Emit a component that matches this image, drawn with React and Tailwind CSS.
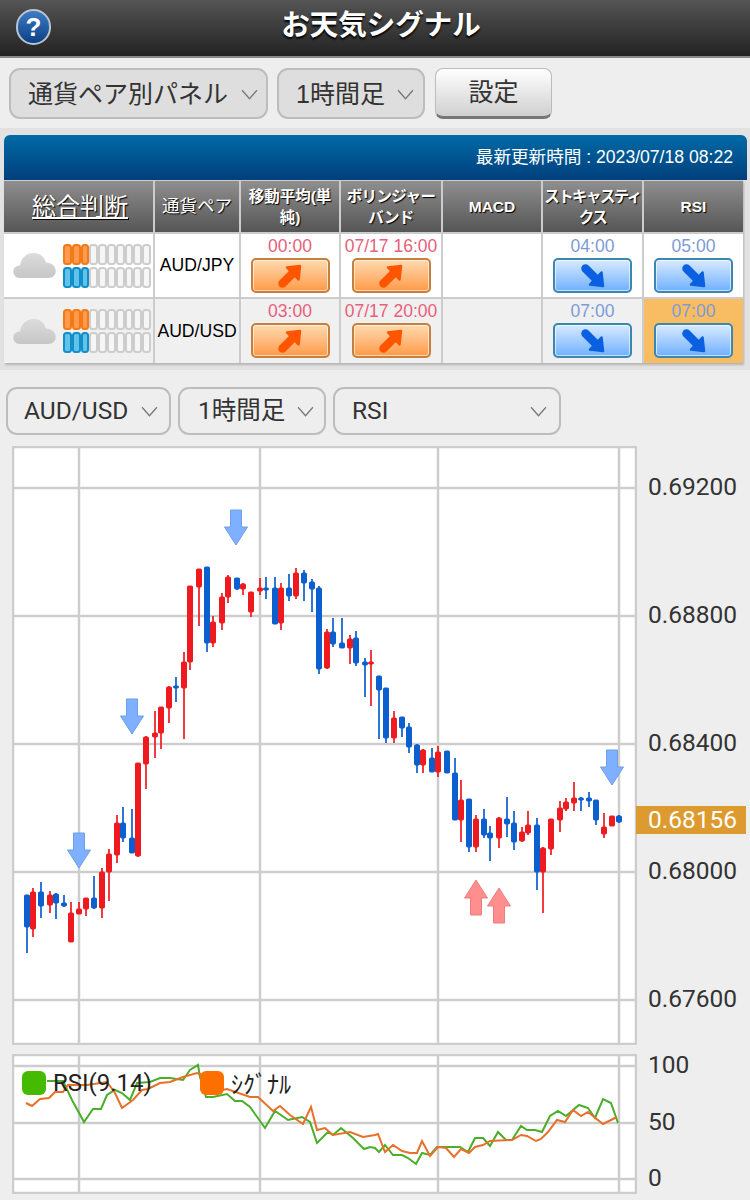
import React from "react";

const R = "#ee1a1f";
const B = "#0b5fcf";
// [x, wickTop, wickBottom, bodyTop, bodyBottom, colour]
const candles = [
  [27,895,953,895,927,B],[33,888,937,892,929,R],[41,882,918,892,906,B],[50,891,913,895,905,R],
  [56,893,919,894,903,B],[64,895,907,903,906,B],[71,902,942,913,942,R],[79,902,914,909,914,R],
  [86,898,916,898,909,R],[94,876,909,898,908,B],[102,868,918,872,908,R],[109,849,901,854,872,R],
  [117,815,863,823,855,R],[123,807,842,823,838,B],[132,809,853,838,853,B],[138,763,857,763,856,R],
  [146,736,789,737,764,R],[155,711,758,733,737,R],[161,707,749,707,733,R],[169,686,723,687,708,R],
  [176,677,702,686,688,B],[184,652,739,662,688,R],[190,586,670,586,662,R],[199,569,626,569,587,R],
  [207,567,652,567,643,B],[213,616,647,622,643,R],[222,593,630,597,623,R],[228,575,603,577,597,R],
  [237,578,590,578,589,B],[243,583,595,584,589,R],[251,592,617,592,612,R],[260,578,595,588,591,R],
  [266,577,599,588,590,B],[275,577,624,588,624,B],[281,583,630,588,623,R],[289,574,601,588,596,B],
  [296,568,599,573,596,R],[304,570,601,573,583,B],[312,579,612,582,589,B],[319,586,674,588,669,B],
  [327,629,669,632,668,R],[333,618,647,632,644,B],[342,618,648,643,648,B],[350,635,664,639,648,R],
  [356,631,666,638,663,B],[365,658,697,662,665,B],[371,650,706,662,664,R],[379,676,739,676,690,B],
  [386,688,743,688,738,B],[394,711,743,718,738,R],[402,717,737,717,728,B],[409,723,753,727,747,B],
  [417,744,773,745,765,B],[423,749,773,750,765,R],[432,748,772,758,772,B],[438,746,777,752,772,R],
  [447,751,773,751,773,B],[455,758,820,773,820,B],[461,780,842,800,820,R],[469,799,852,799,847,B],
  [476,815,852,819,847,R],[484,809,838,819,835,B],[490,826,861,833,838,B],[499,817,848,818,838,R],
  [507,797,837,819,824,B],[514,811,850,823,842,B],[522,827,842,832,841,R],[528,811,835,825,833,R],
  [537,818,890,825,872,B],[543,847,913,848,872,R],[551,819,855,819,849,R],[560,801,832,808,820,R],
  [566,798,811,802,809,R],[574,782,811,798,803,R],[581,797,811,798,800,B],[589,792,807,798,801,B],
  [596,800,825,800,820,B],[604,813,838,827,834,R],[612,816,826,816,826,R],[619,815,823,816,822,B],
];

const green = "47,1081 63,1081 72,1100 84,1122 93,1109 101,1109 107,1095 115,1090 122,1093 130,1100 137,1083 150,1082 160,1078 170,1078 183,1080 190,1070 198,1065 200,1077 206,1097 213,1097 227,1094 235,1101 242,1101 250,1107 265,1128 275,1111 288,1120 302,1117 310,1122 317,1143 328,1132 333,1135 341,1128 353,1138 364,1149 370,1147 375,1148 379,1152 385,1145 393,1155 402,1155 408,1158 416,1164 422,1153 430,1155 437,1147 460,1147 468,1152 475,1138 483,1138 490,1146 498,1132 506,1140 512,1140 521,1126 527,1130 535,1130 542,1132 550,1116 558,1111 566,1116 579,1105 588,1108 595,1118 603,1099 611,1103 618,1123";
const orange = "26,1103 32,1106 40,1099 49,1098 55,1092 63,1092 68,1085 87,1085 107,1082 115,1093 122,1108 133,1100 142,1090 148,1089 160,1083 170,1082 183,1077 197,1073 203,1075 213,1092 227,1089 250,1097 258,1097 273,1111 280,1106 290,1115 303,1124 311,1107 317,1130 325,1128 333,1135 350,1132 363,1137 375,1135 378,1134 385,1152 393,1145 402,1151 410,1153 417,1153 422,1141 430,1156 438,1147 446,1148 454,1157 461,1149 469,1153 475,1147 483,1145 490,1141 512,1140 521,1135 527,1136 536,1141 541,1139 548,1132 557,1120 565,1122 573,1110 581,1116 588,1112 603,1124 617,1117";

const downArrows = [[79,833],[132,699],[236,510],[612,750]];
const upArrows = [[476,880],[499,888]];

function Chevron({ className }) {
  return (
    <svg viewBox="0 0 16 10" className={className} fill="none" stroke="#777" strokeWidth="1.2">
      <path d="M1 1l7 8 7-8" />
    </svg>
  );
}

function Select({ label, className, chevron }) {
  return (
    <div className={`flex items-center border-2 rounded-[11px] border-[#bdbdbd] text-[#333] ${className}`}>
      <span className="whitespace-nowrap">{label}</span>
      <Chevron className={`w-[17px] h-[11px] ${chevron}`} />
    </div>
  );
}

function Arrow({ dir }) {
  const color = dir === "up" ? "#ff5500" : "#0a60e0";
  return (
    <svg viewBox="0 0 24 24" className="w-[24px] h-[24px]" fill={color} stroke={color} strokeLinejoin="round">
      {dir === "up" ? (
        <g>
          <path d="M4.500 19.500 14 10" strokeWidth="8.500" strokeLinecap="round" fill="none" />
          <path d="M9 3.500 22 2 20.500 15.500Z" strokeWidth="2.500" />
        </g>
      ) : (
        <g>
          <path d="M4.500 4.500 14 14" strokeWidth="8.500" strokeLinecap="round" fill="none" />
          <path d="M9 20.500 22 22 20.500 8.500Z" strokeWidth="2.500" />
        </g>
      )}
    </svg>
  );
}

function Signal({ time, dir, bg }) {
  const up = dir === "up";
  return (
    <div className={`flex flex-col items-center pt-[1px] ${bg}`}>
      <div className={`h-[23px] leading-[23px] text-[17.5px] whitespace-nowrap ${up ? "text-[#e8607a]" : "text-[#7c9bd8]"}`}>{time}</div>
      <div
        className={`w-[79px] h-[35px] rounded-[5px] border-2 flex items-center justify-center shadow-[inset_0_0_0_1px_rgba(255,255,255,0.6)] ${
          up
            ? "border-[#c6803c] bg-gradient-to-b from-[#ffd9ae] to-[#ff9a45]"
            : "border-[#3a88b0] bg-gradient-to-b from-[#d8eaff] to-[#6fb0ff]"
        }`}
      >
        <Arrow dir={dir} />
      </div>
    </div>
  );
}

function Bars({ on, tone }) {
  return (
    <div className="flex">
      {Array.from({ length: 10 }).map((_, i) => (
        <div
          key={i}
          className={`w-[8.8px] h-[21px] rounded-[3.5px] border-2 ${
            i < on
              ? tone === "o"
                ? "bg-[#ff9a50] border-[#f47a14]"
                : "bg-[#62c2ea] border-[#108fca]"
              : "bg-[#f6f6f6] border-[#cdcdcd]"
          }`}
        />
      ))}
    </div>
  );
}

function Weather({ bg, id }) {
  return (
    <div className={`flex items-center pl-[9px] ${bg}`}>
      <svg viewBox="0 0 44 28" className="w-[43px] h-[27px] mr-[7px] shrink-0">
        <defs>
          <linearGradient id={id} x1="0" y1="0" x2="0" y2="1">
            <stop offset="0" stopColor="#dcdcdc" />
            <stop offset="1" stopColor="#c6c6c6" />
          </linearGradient>
        </defs>
        <path
          d="M7 27C2 27 0 23 0 20.500C0 16.500 3 14 7 14C8 7 13 1 21 1C28 1 32 5 34 11C40 11 44 15 44 20C44 24 41 27 36 27Z"
          fill={`url(#${id})`}
        />
      </svg>
      <div className="flex flex-col gap-[2px]">
        <Bars on={3} tone="o" />
        <Bars on={3} tone="b" />
      </div>
    </div>
  );
}

const headCell =
  "flex items-center justify-center text-center bg-gradient-to-b from-[#8f8f8f] to-[#565656] text-white [text-shadow:1px_1px_1px_#000]";
const smallHead = `${headCell} font-bold text-[15.5px] leading-[21px] whitespace-nowrap`;

function Pair({ name, bg }) {
  return <div className={`flex items-center justify-center text-[17.6px] text-black ${bg}`}>{name}</div>;
}

function Grid({ lines }) {
  return (
    <g stroke="#cdcdcd" strokeWidth="2.500" fill="none">
      {lines.map((y) => (
        <path key={y} d={`M12 ${y}H636`} />
      ))}
      {[79, 260, 438, 619].map((x) => (
        <path key={x} d={`M${x} 440V1200`} />
      ))}
    </g>
  );
}

export default function App() {
  return (
    <div className="w-[750px] h-[1200px] overflow-hidden bg-[#eeeeee] font-['Liberation_Sans','Noto_Sans_CJK_JP',sans-serif]">
      <header className="relative h-[58px] bg-gradient-to-b from-[#555555] to-[#232323] border-b-2 border-[#8a8a8a] flex items-center justify-center">
        <div className="absolute left-[16px] top-[9px] w-[35px] h-[36px] rounded-full border-2 border-[#b9c4d2] bg-gradient-to-b from-[#3d7cc4] to-[#0d3f86] flex items-center justify-center text-white font-bold text-[26px] leading-none">
          ?
        </div>
        <h1 className="ml-[12px] -mt-[6px] text-white font-bold text-[28.500px] [text-shadow:0_2px_2px_#000]">お天気シグナル</h1>
      </header>

      <div className="h-[70px] flex items-start pt-[10px] pl-[9px]">
        <Select label="通貨ペア別パネル" className="w-[259px] h-[51px] bg-[#dedede] pl-[17px] pt-[2px] text-[25px]" chevron="ml-[13px]" />
        <Select label="1時間足" className="w-[148px] h-[51px] bg-[#dedede] pl-[17px] pt-[2px] ml-[9px] text-[25px]" chevron="ml-[12px]" />
        <button className="w-[117px] h-[51px] ml-[10px] rounded-[8px] border border-[#bbb] border-b-[3px] border-b-[#777] bg-gradient-to-b from-white to-[#d0d0d0] text-[25px] text-[#333]">
          設定
        </button>
      </div>

      <section className="h-[242px] bg-[#e2e2e2] pt-[7px] pl-[4px]">
        <div className="w-[743px] h-[45px] rounded-t-[6px] bg-gradient-to-b from-[#006ba6] to-[#003f7c] flex items-center justify-end pr-[14px] text-white text-[17.6px]">
          最新更新時間 : 2023/07/18 08:22
        </div>
        <div className="w-[739px] grid grid-cols-[149px_84px_98px_100px_98px_99px_99px] grid-rows-[51px_63px_64px] gap-[2px] bg-[#cccccc] shadow-[1px_2px_2px_#b5b5b5] pt-[1px]">
          <div className={`${headCell} text-[24px] underline pl-[3px]`}>総合判断</div>
          <div className={`${headCell} text-[17.500px]`}>通貨ペア</div>
          <div className={smallHead}>移動平均(単<br />純)</div>
          <div className={`${smallHead} tracking-[-0.6px]`}>ボリンジャー<br />バンド</div>
          <div className={smallHead}>MACD</div>
          <div className={`${smallHead} tracking-[-1.600px]`}>ストキャスティ<br />クス</div>
          <div className={smallHead}>RSI</div>

          <Weather bg="bg-white" id="cloudA" />
          <Pair name="AUD/JPY" bg="bg-white" />
          <Signal time="00:00" dir="up" bg="bg-white" />
          <Signal time="07/17 16:00" dir="up" bg="bg-white" />
          <div className="bg-white" />
          <Signal time="04:00" dir="down" bg="bg-white" />
          <Signal time="05:00" dir="down" bg="bg-white" />

          <Weather bg="bg-[#f0f0f0]" id="cloudB" />
          <Pair name="AUD/USD" bg="bg-[#f0f0f0]" />
          <Signal time="03:00" dir="up" bg="bg-[#f0f0f0]" />
          <Signal time="07/17 20:00" dir="up" bg="bg-[#f0f0f0]" />
          <div className="bg-[#f0f0f0]" />
          <Signal time="07:00" dir="down" bg="bg-[#f0f0f0]" />
          <Signal time="07:00" dir="down" bg="bg-[#f8bc63]" />
        </div>
      </section>

      <div className="h-[76px] flex items-start pt-[17px] pl-[6px] font-['Roboto','Noto_Sans_CJK_JP',sans-serif] text-[24.5px]">
        <Select label="AUD/USD" className="w-[165px] h-[48px] pl-[16px]" chevron="ml-[13px]" />
        <Select label="1時間足" className="w-[148px] h-[48px] ml-[7px] pl-[18px]" chevron="ml-[12px]" />
        <Select label="RSI" className="w-[228px] h-[48px] ml-[7px] pl-[17px]" chevron="ml-[142px]" />
      </div>

      <div className="relative flex items-start pl-[12px] font-['Roboto','Noto_Sans_CJK_JP',sans-serif]">
        <svg viewBox="12 446 625 599" className="w-[625px] h-[599px] bg-white shrink-0">
          <Grid lines={[488, 616, 744, 872, 1000]} />
          <rect x="13" y="447" width="623" height="597" fill="none" stroke="#cdcdcd" strokeWidth="2.500" />
          {candles.map(([x, wt, wb, bt, bb, c], i) => (
            <g key={i} fill={c} stroke={c}>
              <path d={`M${x} ${wt}V${wb}`} strokeWidth="2" opacity="0.85" />
              <rect x={x - 2.5} y={bt} width="5" height={bb - bt} strokeWidth="1" rx="1" />
            </g>
          ))}
          {downArrows.map(([x, y]) => (
            <path
              key={x}
              d={`M${x - 5.500} ${y}h11v17h6L${x} ${y + 35}L${x - 11.500} ${y + 17}h6Z`}
              fill="#7fb0ff"
              stroke="#6b9fe8"
              strokeWidth="1"
            />
          ))}
          {upArrows.map(([x, y]) => (
            <path
              key={x}
              d={`M${x - 5.500} ${y + 35}h11v-17h6L${x} ${y}L${x - 11.500} ${y + 18}h6Z`}
              fill="#ff8f8f"
              stroke="#ee7c7c"
              strokeWidth="1"
            />
          ))}
        </svg>
        <div className="mt-[27px] ml-[11px] h-[540px] flex flex-col justify-between text-[24.5px] leading-[28px] text-[#333]">
          <div>0.69200</div>
          <div>0.68800</div>
          <div>0.68400</div>
          <div>0.68000</div>
          <div>0.67600</div>
        </div>
        <div className="absolute left-[636px] top-[360px] w-[110px] h-[28px] bg-[#dd9a2e] text-white text-[24.5px] leading-[28px] pl-[12px]">
          0.68156
        </div>
      </div>

      <div className="relative flex items-start pl-[12px] mt-[9px] font-['Roboto','Noto_Sans_CJK_JP',sans-serif]">
        <svg viewBox="12 1054 625 140" className="w-[625px] h-[140px] bg-white shrink-0">
          <Grid lines={[1066, 1123, 1179]} />
          <rect x="13" y="1055" width="623" height="138" fill="none" stroke="#cdcdcd" strokeWidth="2.500" />
          <polyline points={green} fill="none" stroke="#4aae2a" strokeWidth="2" />
          <polyline points={orange} fill="none" stroke="#e8702a" strokeWidth="2" />
        </svg>
        <div className="-mt-[2px] ml-[11px] h-[139px] flex flex-col justify-between text-[24.5px] leading-[26px] text-[#333]">
          <div>100</div>
          <div>50</div>
          <div>0</div>
        </div>
        <div className="absolute left-[22px] top-[17px] flex items-center text-[24px] text-[#222] leading-[24px]">
          <span className="w-[24px] h-[24px] rounded-[6px] bg-[#44bb00]" />
          <span className="ml-[7px] w-[147px]">RSI(9.14)</span>
          <span className="w-[24px] h-[24px] rounded-[6px] bg-[#ff6f00]" />
          <span className="ml-[7px] font-['Noto_Sans_CJK_JP',sans-serif]">ｼｸﾞﾅﾙ</span>
        </div>
      </div>
    </div>
  );
}
